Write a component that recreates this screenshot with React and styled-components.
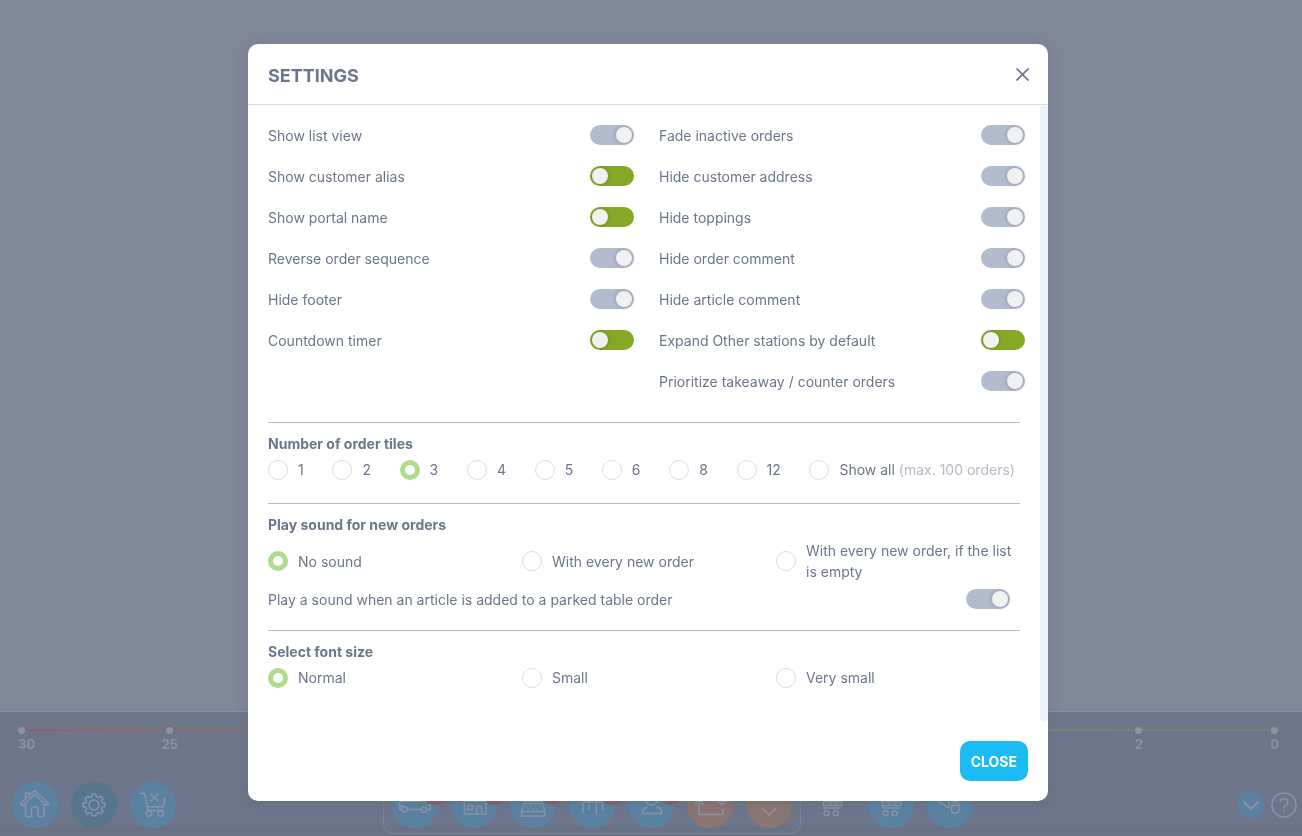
import React, { useState } from "react";
import styled, { createGlobalStyle } from "styled-components"

const GlobalStyle = createGlobalStyle`
  * {
    box-sizing: border-box;
  }

  body {
    margin: 0;
    font-family: Inter, "Liberation Sans", sans-serif;
    font-size: 14px;
    line-height: 21px;
    color: #6b768a;
    background-color: #7f8799;
  }

  button, input {
    font: inherit;
    margin: 0;
  }
`

const Page = styled.div`
  min-height: 100vh;
  display: flex;
  flex-direction: column;
`

const Board = styled.main`
  flex: 1;
`

const PageFooter = styled.footer`
  border-top: 1px solid #8b92a3;
  background: linear-gradient(to top, #6a7385 0, #6a7385 9px, #6c758a 10px);
  padding: 15px 0 2px;
`

const Timeline = styled.div`
  display: flex;
  justify-content: space-between;
  margin: 0 23px 0 18px;
  background: linear-gradient(to right, #8f5f70, #8c6f70 20%, #8a8470 50%, #78866f 82%, #6f836f) no-repeat 4px 2px / calc(100% - 8px) 2px;
`

const Mark = styled.div`
  display: flex;
  flex-direction: column;
  align-items: ${props => props.$align || "center"};
  gap: 2px;
  font-size: 13px;
  font-weight: 700;
  line-height: 16px;
  color: #8a91a3;

  &::before {
    content: "";
    width: 7px;
    height: 7px;
    border-radius: 50%;
    background-color: #8d94a6;
  }
`

const Space = styled.div`
  flex: ${props => props.$grow};
`

const Toolbar = styled.nav`
  display: grid;
  grid-template-columns: 1fr auto 1fr;
  align-items: center;
  margin-top: 23px;
  padding: 0 5px 0 12px;
`

const ButtonGroup = styled.div`
  display: flex;
  align-items: center;
  gap: 13px;
`

const CenterGroup = styled(ButtonGroup)`
  margin-left: 46px;
  gap: 8px;
`

const StationGroup = styled(ButtonGroup)`
  padding: 6px 8px 5px;
  border: 1px solid #7b8397;
  border-radius: 10px;
`

const RightGroup = styled(ButtonGroup)`
  justify-content: flex-end;
  gap: 7px;
`

const circleColors = {
  blue: "#5a82a0",
  dark: "#56768e",
  orange: "#8a7572",
  none: "transparent",
}

const CircleButton = styled.button`
  position: relative;
  display: flex;
  align-items: center;
  justify-content: center;
  width: ${props => props.$size || 46}px;
  height: ${props => props.$size || 46}px;
  padding: 0;
  border: none;
  border-radius: 50%;
  color: #8b94a7;
  background-color: ${props => circleColors[props.$color]};
`

const Badge = styled.span`
  position: absolute;
  top: -1px;
  right: -9px;
  width: 24px;
  height: 24px;
  border-radius: 50%;
  background-color: #8c5b75;
`

const Overlay = styled.div`
  position: fixed;
  inset: 0;
  display: flex;
  align-items: flex-start;
  justify-content: center;
  padding: 44px 6px 0 0;
`

const Modal = styled.section`
  width: 100%;
  max-width: 800px;
  border-radius: 10px;
  background-color: #fff;
  box-shadow: 0 2px 12px rgba(80, 100, 110, 0.3);
`

const ModalHeader = styled.header`
  display: flex;
  align-items: center;
  justify-content: space-between;
  height: 61px;
  padding: 0 16px 0 20px;
  border-bottom: 1px solid #d5dee8;
`

const Title = styled.h1`
  margin: 4px 0 0;
  font-size: 18px;
  font-weight: 700;
  line-height: 24px;
`

const IconButton = styled.button`
  display: flex;
  padding: 3px;
  border: none;
  background: none;
  color: #6b768a;
`

const ModalBody = styled.div`
  display: flex;
`

const Content = styled.div`
  flex: 1;
`

const ScrollTrack = styled.div`
  width: 8px;
  border-radius: 4px;
  background-color: #edf1f9;
`

const SwitchGrid = styled.div`
  display: grid;
  grid-template-columns: 1fr 1fr;
  column-gap: 25px;
  padding: 20px 15px 30px 20px;
`

const SwitchColumn = styled.div`
  display: flex;
  flex-direction: column;
  gap: 20px;
`

const SwitchRow = styled.label`
  display: flex;
  justify-content: space-between;
`

const SoundSwitchRow = styled(SwitchRow)`
  margin-top: 7px;
  padding-right: 10px;
`

const Switch = styled.input`
  appearance: none;
  display: flex;
  width: 44px;
  height: 20px;
  padding: 2px;
  border-radius: 10px;
  background-color: #b3bccf;
  justify-content: flex-end;

  &::before {
    content: "";
    width: 16px;
    height: 16px;
    border-radius: 50%;
    background-color: #f1f1f1;
    box-shadow: 0 0 4px rgba(0, 0, 0, 0.25);
  }

  &:checked {
    background-color: #86a827;
    justify-content: flex-start;
  }
`

const Section = styled.fieldset`
  min-width: 0;
  margin: 0 20px;
  padding: 10px 0 ${props => props.$bottom}px;
  border: none;
  border-top: 1px solid #b3bccb;
`

const SectionTitle = styled.h2`
  margin: 0 0 5px;
  font-size: 14px;
  font-weight: 700;
  line-height: 21px;
`

const TileOptions = styled.div`
  display: flex;
  justify-content: space-between;
  padding-right: 5px;
`

const ThreeOptions = styled.div`
  display: grid;
  grid-template-columns: repeat(3, 1fr);
  column-gap: 10px;
`

const RadioLabel = styled.label`
  display: flex;
  align-items: center;
  gap: 10px;
`

const Radio = styled.input`
  appearance: none;
  flex-shrink: 0;
  width: 20px;
  height: 20px;
  border: 1px solid #d5dfe8;
  border-radius: 50%;

  &:checked {
    border: 5px solid #aedb8c;
  }
`

const Hint = styled.span`
  color: #b4bac6;
`

const ModalFooter = styled.footer`
  display: flex;
  justify-content: flex-end;
  padding: 20px;
`

const CloseButton = styled.button`
  height: 40px;
  padding: 0 11px;
  border: none;
  border-radius: 10px;
  background-color: #1cbbf3;
  color: #fff;
  font-weight: 700;
`

const leftSwitches = [
  ["Show list view", false],
  ["Show customer alias", true],
  ["Show portal name", true],
  ["Reverse order sequence", false],
  ["Hide footer", false],
  ["Countdown timer", true],
]

const rightSwitches = [
  ["Fade inactive orders", false],
  ["Hide customer address", false],
  ["Hide toppings", false],
  ["Hide order comment", false],
  ["Hide article comment", false],
  ["Expand Other stations by default", true],
  ["Prioritize takeaway / counter orders", false],
]

const tileCounts = ["1", "2", "3", "4", "5", "6", "8", "12"]
const sounds = ["No sound", "With every new order", "With every new order, if the list is empty"]
const fontSizes = ["Normal", "Small", "Very small"]

// outline of a cog with eight teeth around the middle of a 46px button
const gearPoints = Array.from({ length: 8 }, (_, i) => {
  const point = (radius, degrees) => {
    const angle = ((i * 45 + degrees) * Math.PI) / 180
    return `${(23 + radius * Math.sin(angle)).toFixed(2)},${(23 + radius * Math.cos(angle)).toFixed(2)}`
  }
  return [point(8.6, -14), point(11, -10), point(11, 10), point(8.6, 14)].join(" ")
}).join(" ")

const cartBasket = <>
  <path d="M8 10h4l3 16h16.500M13 14h21l-1.500 9.500H14.500M13.500 20h19.500M21 14l.7 9.500M27.200 14l-.5 9.500" />
  <circle cx="17.500" cy="31.300" r="2.500" />
  <circle cx="26.700" cy="31.300" r="2.500" />
</>

const icons = {
  home: <path d="M22.500 8.500 36.500 21.500l-2 2-12-11-12 11-2-2ZM13.500 16.500V11h4v2M13.500 22v11q0 1.500 1.500 1.500h4.500V27q0-2 2-2H24q2 0 2 2v7.500h4.500q1.500 0 1.500-1.500V22" />,
  gear: <>
    <polygon points={gearPoints} />
    <circle cx="23" cy="23" r="5" />
  </>,
  cancelCart: <>
    <path d="M10.500 11.500h4l3.800 17H33M16.800 24.700h16.700l1.200-9.700M20.500 11.500l8 8M28.500 11.500l-8 8" />
    <circle cx="19" cy="31.500" r="2.800" />
    <circle cx="30.700" cy="31.500" r="2.800" />
  </>,
  car: <>
    <path d="M10 27.500H8.500Q7.500 27.500 7.500 26.500v-5q0-2 3-2.500l3-6h15l6 6 3 1q1 .5 1 2V26.500q0 1-1 1H35M15.500 27.500h13.500M10.500 19.500h24M22 13.500v6M7.500 24.500h3v-2M38.500 23h-2.500" />
    <circle cx="12.700" cy="27.500" r="2.700" />
    <circle cx="32" cy="27.500" r="2.700" />
  </>,
  shop: <path d="M13.500 19v13H35V19M12 12h24v7H12ZM16.500 23.500h5v4h-5ZM25.500 32V25.500q0-1.500 2.500-1.500t2.500 1.500v6.500" />,
  register: <>
    <path d="M15 19 11.500 29.500V34H35V29.500L31.500 19M11.500 29.500H35M14.500 21.500h17.500M16 13h15v6H16Z" />
    <path d="M16 24.500h15M17.500 27h13" strokeDasharray="1.500 3" />
  </>,
  table: <path d="M14 31V20h6v8M27.500 33V20h6v9M20 20h7.500M12 16h23" />,
  person: <>
    <circle cx="23.500" cy="17" r="6" />
    <path d="M19.500 24.500Q14.500 26 14.500 31.500h19.500Q34 26 28.500 24.500" />
  </>,
  transfer: <path d="M12 17V32.500H36V27M7 23l5-5.500 5 5.500M30.500 18.500l4.500 4 4.500-4M32.500 17l2.500 2.500 2.500-2.500" />,
  down: <path d="m15.500 25.500 7.500 7.500 7.500-7.500" />,
  cart: cartBasket,
  cartUser: <>
    {cartBasket}
    <path d="M20 17.500h8" />
  </>,
  scanner: <>
    <path d="m11 19 11 7V17" />
    <rect x="24.500" y="20" width="7.500" height="11" rx="3" />
    <path d="M25 23.500h7M28.500 17v6.500" />
  </>,
}

const stations = [
  ["car", "blue"],
  ["shop", "blue"],
  ["register", "blue"],
  ["table", "blue"],
  ["person", "blue"],
  ["transfer", "orange"],
  ["down", "orange"],
]

function ToolButton({ icon, color, badge }) {
  return <CircleButton $color={color} aria-label={icon}>
    <svg width="46" height="46" viewBox="0 0 46 46" fill="none" stroke="currentColor" strokeWidth="1.500" strokeLinejoin="round">
      {icons[icon]}
    </svg>
    {badge && <Badge />}
  </CircleButton>
}

function SwitchList({ items }) {
  return <SwitchColumn>
    {items.map(([text, on]) => (
      <SwitchRow key={text}>
        {text}
        <Switch type="checkbox" defaultChecked={on} />
      </SwitchRow>
    ))}
  </SwitchColumn>
}

function RadioOption({ name, value, selected, onSelect, children }) {
  return <RadioLabel>
    <Radio type="radio" name={name} checked={selected === value} onChange={() => onSelect(value)} />
    <span>{children || value}</span>
  </RadioLabel>
}

function App() {
  const [tiles, setTiles] = useState("3")
  const [sound, setSound] = useState("No sound")
  const [fontSize, setFontSize] = useState("Normal")
  const [open, setOpen] = useState(true)

  return <Page>
    <GlobalStyle />
    <Board />

    <PageFooter>
      <Timeline>
        <Mark $align="flex-start">30</Mark>
        <Space $grow={126} />
        <Mark>25</Mark>
        <Space $grow={955} />
        <Mark>2</Mark>
        <Space $grow={127} />
        <Mark>0</Mark>
      </Timeline>

      <Toolbar>
        <ButtonGroup>
          <ToolButton icon="home" color="blue" />
          <ToolButton icon="gear" color="dark" />
          <ToolButton icon="cancelCart" color="blue" />
        </ButtonGroup>

        <CenterGroup>
          <StationGroup>
            {stations.map(([icon, color]) => (
              <ToolButton key={icon} icon={icon} color={color} badge={color === "blue"} />
            ))}
          </StationGroup>
          <ButtonGroup>
            <ToolButton icon="cart" color="none" />
            <ToolButton icon="cartUser" color="blue" />
            <ToolButton icon="scanner" color="blue" />
          </ButtonGroup>
        </CenterGroup>

        <RightGroup>
          <CircleButton $color="blue" $size={27} aria-label="More">
            <svg width="27" height="27" viewBox="0 0 27 27" fill="none" stroke="currentColor" strokeWidth="1.800">
              <path d="m6.500 10.500 7.500 7.500 7.500-7.500" />
            </svg>
          </CircleButton>
          <CircleButton $color="none" $size={26} aria-label="Help">
            <svg width="26" height="26" viewBox="0 0 26 26" fill="none" stroke="currentColor" strokeWidth="1.500">
              <circle cx="13" cy="13" r="12" />
              <path d="M9.300 10.200Q9.500 6.500 13 6.500t3.800 3.500q0 2-2 3.300T13 16.500M13 18v2" />
            </svg>
          </CircleButton>
        </RightGroup>
      </Toolbar>
    </PageFooter>

    {open && <Overlay>
      <Modal role="dialog" aria-labelledby="settings-title">
        <ModalHeader>
          <Title id="settings-title">SETTINGS</Title>
          <IconButton aria-label="Close" onClick={() => setOpen(false)}>
            <svg width="13" height="13" viewBox="0 0 13 13" stroke="currentColor" strokeWidth="1.700">
              <path d="M.5.5l12 12M12.500.5l-12 12" />
            </svg>
          </IconButton>
        </ModalHeader>

        <ModalBody>
          <Content>
            <SwitchGrid>
              <SwitchList items={leftSwitches} />
              <SwitchList items={rightSwitches} />
            </SwitchGrid>

            <Section $bottom={23}>
              <SectionTitle>Number of order tiles</SectionTitle>
              <TileOptions>
                {tileCounts.map(count => (
                  <RadioOption key={count} name="tiles" value={count} selected={tiles} onSelect={setTiles} />
                ))}
                <RadioOption name="tiles" value="all" selected={tiles} onSelect={setTiles}>
                  Show all <Hint>(max. 100 orders)</Hint>
                </RadioOption>
              </TileOptions>
            </Section>

            <Section $bottom={20}>
              <SectionTitle>Play sound for new orders</SectionTitle>
              <ThreeOptions>
                {sounds.map(item => (
                  <RadioOption key={item} name="sound" value={item} selected={sound} onSelect={setSound} />
                ))}
              </ThreeOptions>
              <SoundSwitchRow>
                Play a sound when an article is added to a parked table order
                <Switch type="checkbox" />
              </SoundSwitchRow>
            </Section>

            <Section $bottom={33}>
              <SectionTitle>Select font size</SectionTitle>
              <ThreeOptions>
                {fontSizes.map(item => (
                  <RadioOption key={item} name="fontSize" value={item} selected={fontSize} onSelect={setFontSize} />
                ))}
              </ThreeOptions>
            </Section>
          </Content>
          <ScrollTrack />
        </ModalBody>

        <ModalFooter>
          <CloseButton onClick={() => setOpen(false)}>CLOSE</CloseButton>
        </ModalFooter>
      </Modal>
    </Overlay>}
  </Page>
}

export default App
